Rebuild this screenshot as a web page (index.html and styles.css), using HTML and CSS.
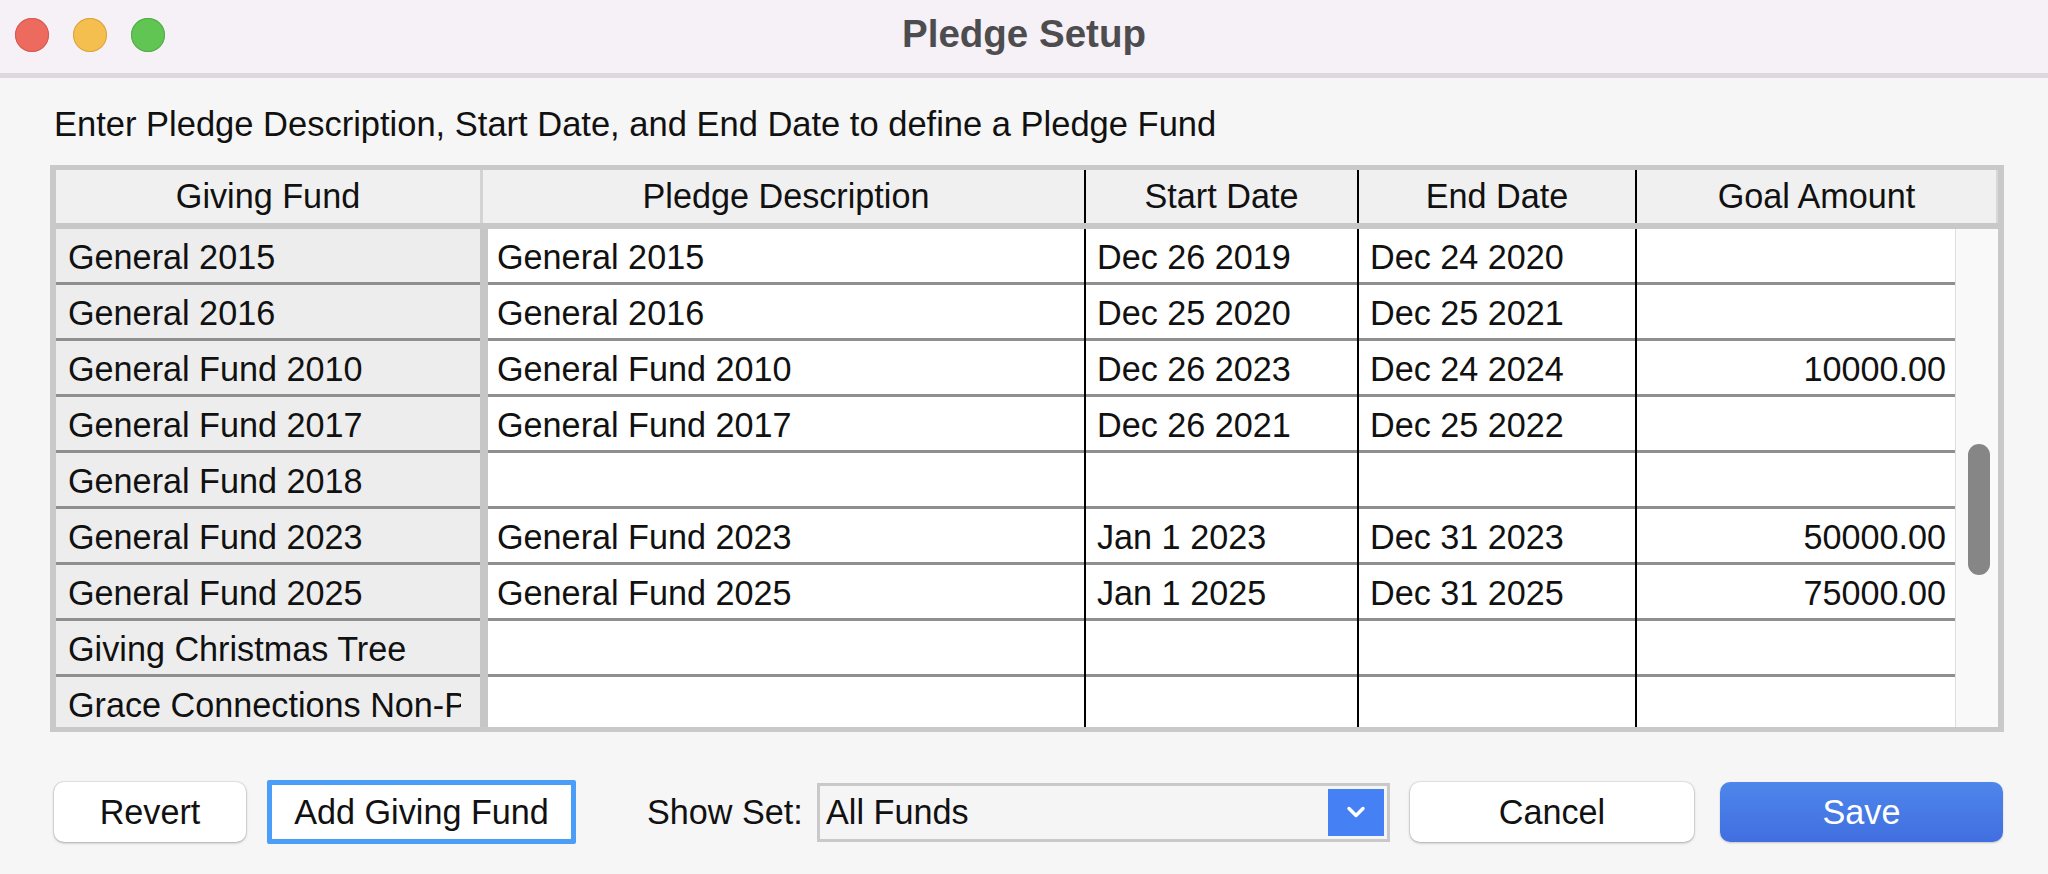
FILE: index.html
```html
<!DOCTYPE html>
<html lang="en">
<head>
<meta charset="utf-8">
<title>Pledge Setup</title>
<link rel="stylesheet" href="styles.css">
</head>
<body>
<div class="window">
  <header class="titlebar">
    <div class="lights">
      <span class="light close"></span>
      <span class="light min"></span>
      <span class="light max"></span>
    </div>
    <h1 class="title">Pledge Setup</h1>
    <div class="spacer"></div>
  </header>

  <main class="content">
    <p class="instructions">Enter Pledge Description, Start Date, and End Date to define a Pledge Fund</p>

    <section class="table">
      <div class="thead">
        <div class="th">Giving Fund</div>
        <div class="hsep soft"></div>
        <div class="th">Pledge Description</div>
        <div class="hsep dark"></div>
        <div class="th">Start Date</div>
        <div class="hsep dark"></div>
        <div class="th">End Date</div>
        <div class="hsep dark"></div>
        <div class="th">Goal Amount</div>
        <div class="hsep end"></div>
      </div>

      <div class="tbody">
        <div class="grid">
          <div class="vsep vsep-1"></div>
          <div class="vsep vsep-2"></div>
          <div class="vsep vsep-3"></div>
          <div class="vsep vsep-4"></div>

          <div class="cell fund"><span class="txt">General 2015</span></div>
          <div class="cell desc">General 2015</div>
          <div class="cell date">Dec 26 2019</div>
          <div class="cell date">Dec 24 2020</div>
          <div class="cell amt"></div>

          <div class="cell fund"><span class="txt">General 2016</span></div>
          <div class="cell desc">General 2016</div>
          <div class="cell date">Dec 25 2020</div>
          <div class="cell date">Dec 25 2021</div>
          <div class="cell amt"></div>

          <div class="cell fund"><span class="txt">General Fund 2010</span></div>
          <div class="cell desc">General Fund 2010</div>
          <div class="cell date">Dec 26 2023</div>
          <div class="cell date">Dec 24 2024</div>
          <div class="cell amt">10000.00</div>

          <div class="cell fund"><span class="txt">General Fund 2017</span></div>
          <div class="cell desc">General Fund 2017</div>
          <div class="cell date">Dec 26 2021</div>
          <div class="cell date">Dec 25 2022</div>
          <div class="cell amt"></div>

          <div class="cell fund"><span class="txt">General Fund 2018</span></div>
          <div class="cell desc"></div>
          <div class="cell date"></div>
          <div class="cell date"></div>
          <div class="cell amt"></div>

          <div class="cell fund"><span class="txt">General Fund 2023</span></div>
          <div class="cell desc">General Fund 2023</div>
          <div class="cell date">Jan 1 2023</div>
          <div class="cell date">Dec 31 2023</div>
          <div class="cell amt">50000.00</div>

          <div class="cell fund"><span class="txt">General Fund 2025</span></div>
          <div class="cell desc">General Fund 2025</div>
          <div class="cell date">Jan 1 2025</div>
          <div class="cell date">Dec 31 2025</div>
          <div class="cell amt">75000.00</div>

          <div class="cell fund"><span class="txt">Giving Christmas Tree</span></div>
          <div class="cell desc"></div>
          <div class="cell date"></div>
          <div class="cell date"></div>
          <div class="cell amt"></div>

          <div class="cell fund"><span class="txt">Grace Connections Non-Profit</span></div>
          <div class="cell desc"></div>
          <div class="cell date"></div>
          <div class="cell date"></div>
          <div class="cell amt"></div>
        </div>
        <div class="scrollbar"><div class="thumb"></div></div>
      </div>
    </section>

    <div class="actions">
      <button class="btn btn-revert" type="button">Revert</button>
      <button class="btn btn-add" type="button">Add Giving Fund</button>
      <span class="label">Show Set:</span>
      <div class="select">
        <span class="select-value">All Funds</span>
        <span class="select-arrow">
          <svg width="22" height="14" viewBox="0 0 22 14" aria-hidden="true">
            <polyline points="4,3.5 11,10.5 18,3.5" fill="none" stroke="#ffffff" stroke-width="3.4" stroke-linecap="round" stroke-linejoin="round"/>
          </svg>
        </span>
      </div>
      <button class="btn btn-cancel" type="button">Cancel</button>
      <button class="btn btn-save" type="button">Save</button>
    </div>
  </main>
</div>
</body>
</html>
```

FILE: styles.css
```css
* {
  box-sizing: border-box;
  margin: 0;
  padding: 0;
}

html, body {
  width: 2048px;
  height: 874px;
  overflow: hidden;
}

body {
  background: #f6f6f6;
  font-family: "Liberation Sans", Arial, Helvetica, sans-serif;
  color: #111;
}

.window {
  width: 2048px;
  height: 874px;
  display: flex;
  flex-direction: column;
  background: #f6f6f6;
}

/* ---------- title bar ---------- */
.titlebar {
  flex: none;
  height: 78px;
  background: #f6f0f7;
  border-bottom: 5px solid #dcd8de;
  display: grid;
  grid-template-columns: 1fr auto 1fr;
  align-items: center;
}

.lights {
  display: flex;
  gap: 24px;
  padding-left: 15px;
  margin-bottom: 3px;
}

.light {
  width: 34px;
  height: 34px;
  border-radius: 50%;
}

.close { background: #ed6a5e; box-shadow: inset 0 0 0 1px #d65a4f; }
.min   { background: #f5bf4f; box-shadow: inset 0 0 0 1px #d9a441; }
.max   { background: #61c554; box-shadow: inset 0 0 0 1px #52ab45; }

.title {
  font-size: 38.5px;
  font-weight: 700;
  color: #4d4d50;
  margin-bottom: 6px;
  white-space: nowrap;
}

/* ---------- content ---------- */
.content {
  flex: 1;
  padding: 26px 44px 0 50px;
}

.instructions {
  font-size: 34.5px;
  line-height: 40px;
  padding-left: 4px;
  margin-bottom: 21px;
  white-space: nowrap;
}

/* ---------- table ---------- */
.table {
  border-style: solid;
  border-color: #c9c9c9;
  border-width: 5px 6px;
  background: #fff;
}

.thead {
  display: grid;
  grid-template-columns: 424px 8px 596px 2px 271px 2px 276px 2px 359px 2px;
  height: 59px;
  background: #f0f0f0;
  border-bottom: 6px solid #c8c8c8;
}

.th {
  font-size: 34.2px;
  line-height: 53px;
  text-align: center;
  white-space: nowrap;
  overflow: hidden;
}

.hsep.soft { border-left: 3px solid #d3d3d3; }
.hsep.dark { background: #000; }
.hsep.end  { background: #d8d8d8; }

.tbody {
  display: flex;
  height: 498px;
  overflow: hidden;
}

.grid {
  flex: none;
  width: 1899px;
  display: grid;
  grid-template-columns: 424px 8px 596px 2px 271px 2px 276px 2px 318px;
  grid-template-rows: repeat(9, 56px);
  background: #fff;
}

.vsep { grid-row: 1 / -1; }
.vsep-1 { grid-column: 2; background: #c6c6c6; }
.vsep-2 { grid-column: 4; background: #000; }
.vsep-3 { grid-column: 6; background: #000; }
.vsep-4 { grid-column: 8; background: #000; }

.cell {
  border-bottom: 3px solid #8f8f8f;
  padding: 3px 9px 0 11px;
  font-size: 34.2px;
  line-height: 50px;
  white-space: nowrap;
  overflow: hidden;
}

.fund {
  background: #ededed;
  padding-left: 12px;
  padding-right: 19px;
}

.fund .txt {
  display: block;
  overflow: hidden;
}

.desc { padding-left: 9px; }
.date { padding-left: 11px; }
.amt  { text-align: right; padding-right: 9px; }

.scrollbar {
  flex: none;
  width: 43px;
  background: #f9f9f9;
  border-left: 1px solid #dedede;
  padding: 215px 0 0 12px;
}

.thumb {
  width: 22px;
  height: 131px;
  border-radius: 11px;
  background: #868686;
}

/* ---------- action bar ---------- */
.actions {
  display: flex;
  align-items: center;
  height: 64px;
  margin-top: 48px;
  padding-left: 4px;
}

.btn {
  flex: none;
  height: 60px;
  font-family: inherit;
  font-size: 34.2px;
  color: #111;
  background: #fff;
  border: none;
  border-radius: 10px;
  box-shadow: 0 0 0 1px rgba(0, 0, 0, 0.06), 0 1px 3px rgba(0, 0, 0, 0.28);
}

.btn-revert { width: 192px; }

.btn-add {
  width: 309px;
  height: 64px;
  margin-left: 21px;
  border: 5px solid #4a9ef8;
  border-radius: 2px;
  box-shadow: none;
}

.label {
  flex: none;
  width: 151px;
  margin-left: 71px;
  font-size: 34.2px;
  white-space: nowrap;
}

.select {
  flex: none;
  margin-left: 19px;
  width: 573px;
  height: 59px;
  border: 3px solid #c9c9c9;
  background: #f5f5f5;
  display: flex;
  align-items: center;
  justify-content: space-between;
  padding: 0 3px 0 6px;
  font-size: 34.2px;
}

.select-arrow {
  width: 56px;
  height: 47px;
  background: #4680f5;
  display: flex;
  align-items: center;
  justify-content: center;
}

.btn-cancel {
  width: 284px;
  margin-left: 20px;
}

.btn-save {
  width: 283px;
  margin-left: 26px;
  color: #fff;
  background: linear-gradient(#4e86eb, #416ee0);
  box-shadow: 0 1px 2px rgba(0, 0, 0, 0.2);
}
```
